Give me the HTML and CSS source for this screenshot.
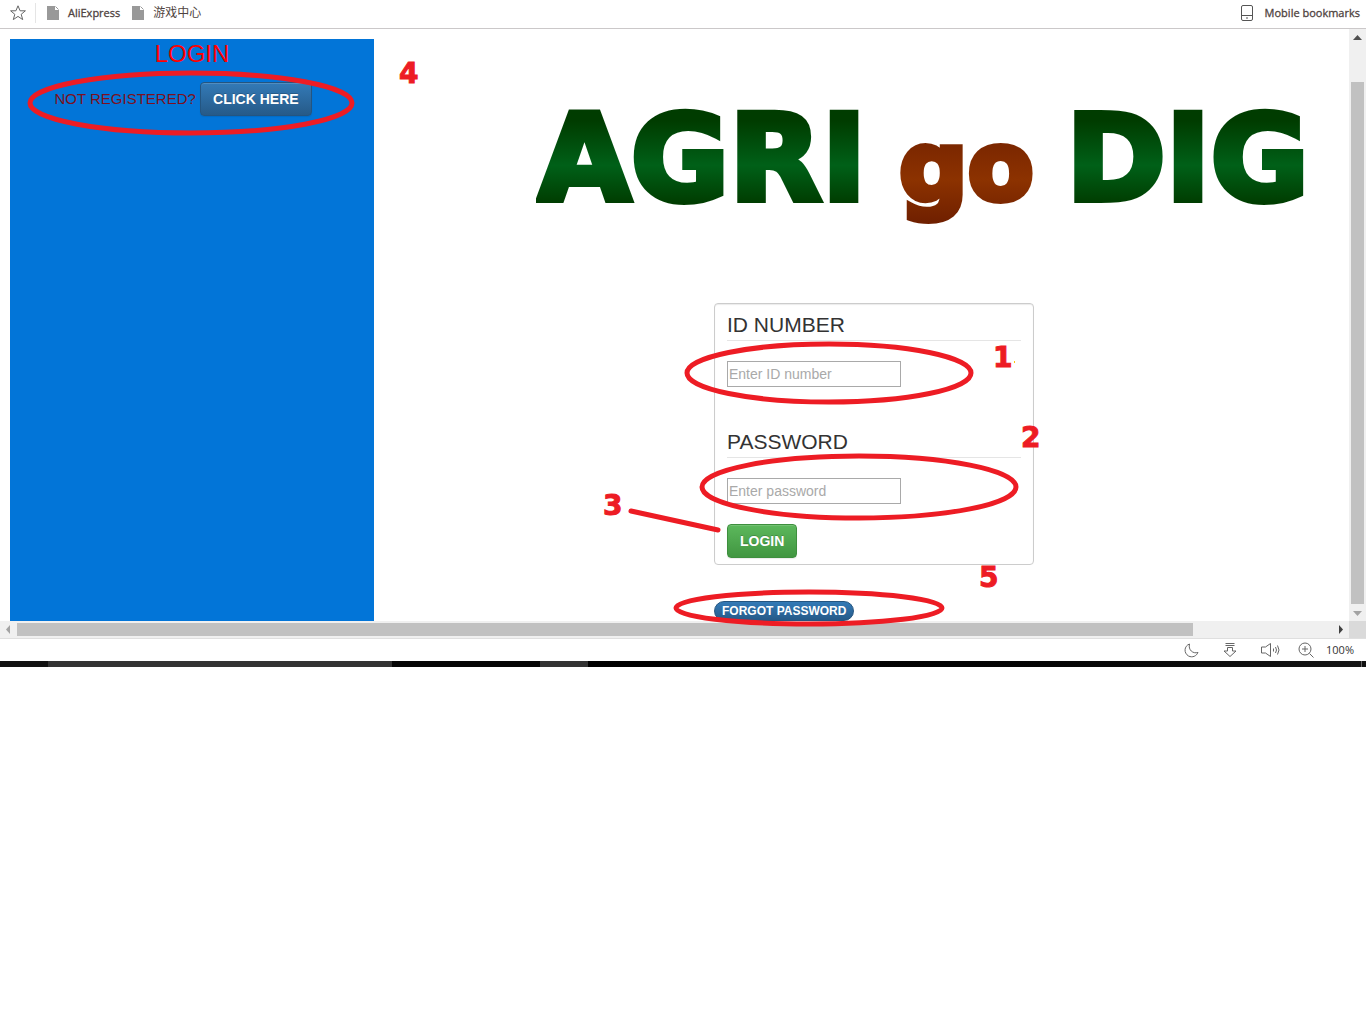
FILE: index.html
```html
<!DOCTYPE html>
<html lang="en">
<head>
<meta charset="utf-8">
<title>AGRIgoDIG - Login</title>
<link rel="stylesheet" href="styles.css">
</head>
<body>
<header class="bookmarks">
  <svg class="star" width="18" height="18" viewBox="0 0 18 18" fill="none" stroke="#666"><path d="M9 1.800l2.100 5h5.300l-4.200 3.500 1.500 5.300L9 12.400l-4.700 3.200 1.500-5.300L1.600 6.800h5.300z"/></svg>
  <a class="bookmark" href="#"><svg width="12" height="14" viewBox="0 0 12 14"><path fill="#999" d="M0 0h8v4h4v10H0z"/><path fill="none" stroke="#999" d="M8.500.5l3 3"/></svg>AliExpress</a>
  <a class="bookmark" href="#" lang="zh"><svg width="12" height="14" viewBox="0 0 12 14"><path fill="#999" d="M0 0h8v4h4v10H0z"/><path fill="none" stroke="#999" d="M8.500.5l3 3"/></svg>游戏中心</a>
  <a class="bookmark mobile" href="#"><svg width="12" height="16" viewBox="0 0 12 16"><rect x=".5" y=".5" width="11" height="15" rx="1.500" fill="none" stroke="#555"/><path stroke="#555" d="M1 10.500h10M5 13h2"/></svg>Mobile bookmarks</a>
</header>

<div class="viewport">
  <div class="content">
    <aside class="sidebar">
      <h1 class="sidebar-title">LOGIN</h1>
      <p class="register">NOT REGISTERED? <button class="btn btn-primary" type="button">CLICK HERE</button></p>
      <svg class="marks" width="364" height="120">
        <ellipse cx="181" cy="64" rx="161" ry="30"/>
        <text x="389" y="44">4</text>
      </svg>
    </aside>
    <main class="main">
      <div class="logo"><span>AGRI</span><span class="go">go</span><span>DIG</span></div>
      <div class="login">
        <form class="panel">
          <label class="legend" for="idnum">ID NUMBER</label>
          <input class="field" id="idnum" type="text" placeholder="Enter ID number">
          <label class="legend second" for="pass">PASSWORD</label>
          <input class="field" id="pass" type="password" placeholder="Enter password">
          <button class="btn btn-success" type="button">LOGIN</button>
        </form>
        <button class="forgot" type="button">FORGOT PASSWORD</button>
        <svg class="marks" width="320" height="318">
          <ellipse cx="115" cy="70" rx="142" ry="29"/>
          <ellipse cx="145" cy="184" rx="157" ry="31"/>
          <ellipse cx="95" cy="305" rx="133" ry="16"/>
          <path d="M-83 208L4 227"/>
          <text x="279" y="64">1</text>
          <text x="307" y="144">2</text>
          <text x="-111" y="212">3</text>
          <text x="265" y="284">5</text>
          <rect x="300" y="58" width="1" height="2"/>
        </svg>
      </div>
    </main>
  </div>
  <div class="vscroll">
    <svg width="17" height="17"><path fill="#505050" d="M4 11h9L8.500 6z"/></svg>
    <div class="vthumb"></div>
    <svg width="17" height="17"><path fill="#a3a3a3" d="M4 7h9l-4.500 5z"/></svg>
  </div>
</div>
<div class="hscroll">
  <svg width="17" height="17"><path fill="#a3a3a3" d="M10 4v9L6 8.500z"/></svg>
  <div class="htrack"><div class="hthumb"></div></div>
  <svg width="17" height="17"><path fill="#404040" d="M7 4v9l4-4.500z"/></svg>
  <div class="corner"></div>
</div>
<footer class="status">
  <svg width="16" height="16" viewBox="0 0 16 16"><path d="M5.500 2C0 4-.5 11 4.500 14c4 2 8 0 9.500-3.500C9 12 4 8 5.500 2z"/></svg>
  <svg width="16" height="16" viewBox="0 0 16 16"><path d="M3.500 1.500h9M3.500 3.500h9M5.500 9V5.500h5V9H14l-6 5.500L2 9z"/></svg>
  <svg class="sound" width="20" height="16" viewBox="0 0 20 16"><path d="M1.500 5v6h4l5 3.500v-13L5.500 5zM13.500 6.500v3M15.500 5q2 3 0 6M17.500 3.500q3 4.500 0 9"/></svg>
  <svg width="16" height="16" viewBox="0 0 16 16"><circle cx="7" cy="7" r="6"/><path d="M4 7h6M7 4v6M11.500 11.500L15.500 15.500"/></svg>
  <span>100%</span>
</footer>
<div class="taskbar"><i class="tasks"></i><i class="gap"></i><i class="task"></i><i class="tray"></i></div>
</body>
</html>
```
FILE: styles.css
```css
* { box-sizing: border-box; }
body {
  margin: 0;
  background: #fff;
  color: #333;
  font: 14px/20px "Liberation Sans", Arial, sans-serif;
}
svg { display: block; flex: none; }

.bookmarks {
  display: flex;
  align-items: center;
  height: 29px;
  padding: 0 6px 3px 9px;
  border-bottom: 1px solid #cbc8c9;
  font: 11px/20px "Open Sans", "Noto Sans CJK SC", sans-serif;
}
.bookmark {
  display: flex;
  align-items: center;
  gap: 9px;
  margin-right: 12px;
  color: #4f4340;
  text-decoration: none;
  -webkit-text-stroke: 0.3px #4f4340;
}
.bookmark:lang(zh) {
  font-size: 12px;
  -webkit-text-stroke: 0;
}
.star {
  margin-right: 8px;
}
.star + .bookmark {
  padding-left: 11px;
  border-left: 1px solid #e5e5e5;
}
.bookmarks .mobile { margin: 0 0 0 auto; gap: 12px; }

.viewport { display: flex; }
.content {
  display: flex;
  flex: 1;
  padding: 10px 0 0 10px;
}
.sidebar {
  position: relative;
  width: 364px;
  flex: none;
  background: #0275d8;
  text-align: center;
}
.sidebar-title {
  margin: 0 0 13px;
  color: #f00;
  font-size: 24px;
  line-height: 30px;
  font-weight: normal;
}
.register {
  margin: 0;
  padding-right: 18px;
  color: #7d1020;
  font-size: 15px;
}
.main { flex: 1; }
.logo {
  display: flex;
  align-items: baseline;
  justify-content: space-between;
  height: 264px;
  padding: 56px 38px 0 162px;
  font: bold 120px/128px "DejaVu Sans", sans-serif;
}
.logo span {
  padding: 0 2px;
  background: linear-gradient(#003c00 20%, #006018 55%, #003c00 85%);
  -webkit-background-clip: text;
  background-clip: text;
  color: transparent;
  -webkit-text-stroke: 6px transparent;
}
.logo .go {
  background-image: linear-gradient(#7a2600 30%, #8c3200 60%, #6a1c00);
  font-size: 96px;
}
.login {
  position: relative;
  width: 320px;
  margin-left: 340px;
}
.panel {
  padding: 6px 12px;
  border: 1px solid #ccc;
  border-radius: 4px;
  box-shadow: inset 0 1px 1px rgba(0, 0, 0, .08);
}
.legend {
  display: block;
  margin-bottom: 20px;
  border-bottom: 1px solid #e5e5e5;
  font-size: 21px;
  line-height: 30px;
}
.second { margin-top: 40px; }
.field {
  display: block;
  width: 174px;
  height: 26px;
  padding: 1px;
  border: 1px solid #a9a9a9;
  background: #fff;
  font: inherit;
}
.field::placeholder { color: #a9a9a9; }
.btn {
  height: 34px;
  padding: 0 12px;
  border: 1px solid;
  border-radius: 4px;
  color: #fff;
  font: bold 14px/20px "Liberation Sans", Arial, sans-serif;
  text-shadow: 0 -1px 0 rgba(0, 0, 0, .2);
  box-shadow: inset 0 1px 0 rgba(255, 255, 255, .15), 0 1px 1px rgba(0, 0, 0, .08);
}
.btn-primary {
  border-color: #245580;
  background: linear-gradient(#337ab7, #265a88);
}
.btn-success {
  display: block;
  margin-top: 20px;
  border-color: #3e8f3e;
  background: linear-gradient(#5cb85c, #419641);
}
.forgot {
  display: block;
  height: 20px;
  margin-top: 36px;
  padding: 0 7px;
  border: 1px solid #245580;
  border-radius: 10px;
  background: linear-gradient(#337ab7, #265a88);
  color: #fff;
  font: bold 12px/18px "Liberation Sans", Arial, sans-serif;
}

/* Hand-drawn red callouts laid over the page */
.marks {
  position: absolute;
  top: 0;
  left: 0;
  overflow: visible;
  pointer-events: none;
  fill: none;
  stroke: #ed1c24;
  stroke-width: 5px;
  stroke-linecap: round;
}
.marks text {
  fill: #ed1c24;
  stroke-width: 1px;
  font: bold 28px "DejaVu Sans", sans-serif;
}
.marks rect { fill: #ffc20e; stroke: none; }

.vscroll {
  display: flex;
  flex-direction: column;
  width: 17px;
  background: #f0f0f0;
}
.vthumb {
  flex: 1;
  margin: 36px 2px 0;
  background: #c1c1c1;
}
.hscroll {
  display: flex;
  height: 18px;
  border-bottom: 1px solid #dfdfdf;
  background: #f0f0f0;
}
.htrack { flex: 1; padding: 2px 139px 2px 0; }
.hthumb {
  height: 13px;
  background: #c1c1c1;
}
.corner { width: 17px; background: #dadada; }

.status {
  display: flex;
  align-items: center;
  justify-content: flex-end;
  gap: 22px;
  height: 22px;
  padding-right: 12px;
  font: 11px/20px "Open Sans", sans-serif;
}
.status svg { fill: none; stroke: #666; }
.status .sound { margin: 0 -4px 0 0; }
.status span { margin-left: -10px; }

.taskbar { display: flex; height: 6px; padding-left: 48px; background: #111; }
.tasks { width: 344px; background: #333; }
.gap { width: 148px; background: #050505; }
.task { width: 48px; background: #333; }
.tray { flex: 1; margin-right: 4px; border-right: 1px solid #666; background: linear-gradient(90deg, #000, #050505 60%, #151515); }
```
